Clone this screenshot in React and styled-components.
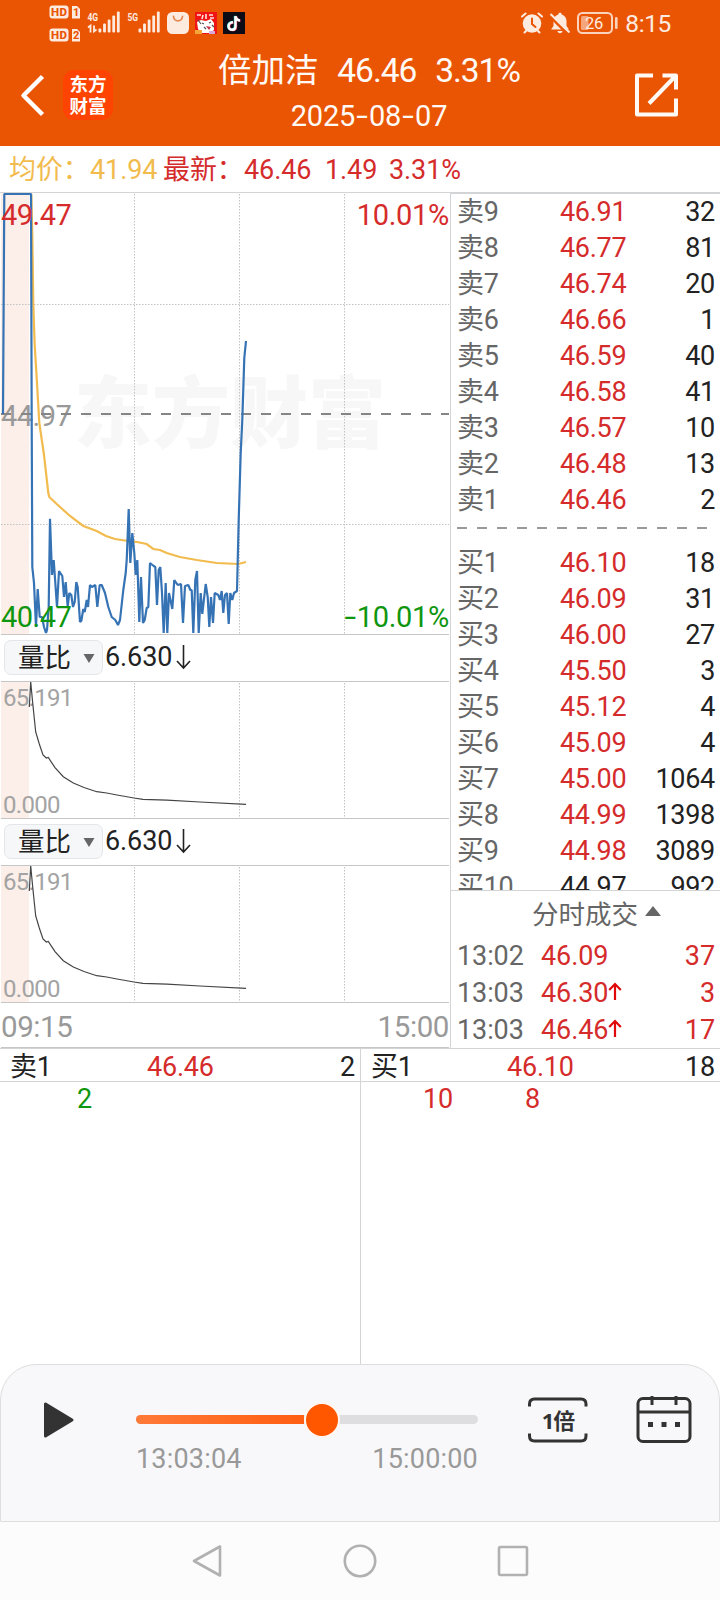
import React from 'react';
import styled, { createGlobalStyle } from 'styled-components';

// ── Theme values ────────────────────────────────────────────────────────────
const c = {
  brand: '#ea5504',
  red: '#d52b2b',
  green: '#0f960f',
  gold: '#f2bb4e',
  blue: '#3673b5',
  line: '#d3d4d6',
  axis: '#c6c6c6',
  text: '#222',
  label: '#666',
  muted: '#999',
};

const GlobalStyle = createGlobalStyle`
  * { box-sizing: border-box; }
  body {
    margin: 0;
    background: #fff;
    color: ${c.text};
    font-family: Roboto, 'Noto Sans CJK SC', sans-serif;
    font-size: 27px;
    letter-spacing: -0.1px;
  }
  svg { display: block; flex: none; }
`;

// ── Data ────────────────────────────────────────────────────────────────────
const asks = [
  ['卖9', '46.91', 32], ['卖8', '46.77', 81], ['卖7', '46.74', 20],
  ['卖6', '46.66', 1], ['卖5', '46.59', 40], ['卖4', '46.58', 41],
  ['卖3', '46.57', 10], ['卖2', '46.48', 13], ['卖1', '46.46', 2],
];

const bids = [
  ['买1', '46.10', 18], ['买2', '46.09', 31], ['买3', '46.00', 27],
  ['买4', '45.50', 3], ['买5', '45.12', 4], ['买6', '45.09', 4],
  ['买7', '45.00', 1064], ['买8', '44.99', 1398], ['买9', '44.98', 3089],
  ['买10', '44.97', 992],
];

const trades = [
  { time: '13:02', price: '46.09', volume: 37 },
  { time: '13:03', price: '46.30', volume: 3, up: true },
  { time: '13:03', price: '46.46', volume: 17, up: true },
];

const pricePoints = `3,414 4.3,194 31,194 31.7,420 32.3,567 34,583 36,627 37.7,589 39.7,617 42,617
  44,627 46,633 47,630 48.7,607 50,518.7 52,575 53.7,560 57,607 59,571 62.3,576 64,597 65.7,582
  67.7,607 69.3,593 71.3,595 73,607 74.7,602 76.3,582 77.7,587 80,622 81.3,621 83.3,609 84.7,612
  86.7,600 88,607 90,585 92,587 95.3,585 97.3,607 99.7,585 101.7,585 105,593 108.3,607 111.7,617
  115.3,620 118,625 120,620 123.3,590 125.7,573 126.7,560 128.7,509 130.3,563 132.3,533 134.3,553
  135.7,575 137.3,560 139.3,622 141,577 143,623 144.7,620 146.7,608 148.3,607 150,563 153.7,566
  155.3,567 157,605 158.7,570 160.3,567 162,593 163.7,633 165.7,583 167.3,633 169,593 172.3,609
  174.3,580 177.7,585 181,584 183,623 185,586 188.3,585 190.3,590 191.7,590 193.3,633 195.3,580
  197,571 198.7,633 200.7,593 202.3,614 205.7,584 207.7,597 209.3,627 211,597 213,623 214.7,593
  218.3,595 220,600 221.7,591 223.3,613 225,595 227,593 228.7,624 230.3,593 232.3,600 234,593
  237,591 238.7,520 240.7,453 242.3,420 244.3,358 246,341`;

const averagePoints = `31.3,194 32.3,235 33.3,304 34.7,345 36.7,378 39.3,423 44,455 48.3,493 49.3,497
  56.7,504 70,516 83.3,526 96.7,531 106,536 115,539 128.3,541 137,542 146.7,544 153.3,549 160,550
  166.7,553 180,557 196.7,560 216.7,563 238.3,564 246,562`;

const ratioPoints = `29.3,25 30.7,0 32.7,21 35.7,50 39.3,62 43,73 46.3,76 48.3,75.5 55,85.7 63.3,94.7
  73.3,101 84,105.500 96.7,109.7 106.7,111 117,113 134,116 143,117.3 167,118.2 200,120 246,122.3`;

const gridX = [134.5, 239.5, 344.5];

// ── Header ──────────────────────────────────────────────────────────────────
const Screen = styled.div`
  width: 720px;
  height: 1600px;
  display: flex;
  flex-direction: column;
  overflow: hidden;
`;

const Header = styled.header`
  height: 146px;
  background: ${c.brand};
  color: #fffaf5;
`;

const StatusBar = styled.div`
  height: 46px;
  padding: 0 49px;
  display: flex;
  justify-content: space-between;
`;

const StatusGroup = styled.div`
  display: flex;
  align-items: center;
  gap: ${(p) => p.$gap}px;
`;

const Clock = styled.span`
  margin-left: 1px;
  padding-top: 2px;
  font-size: 24.5px;
  line-height: 46px;
  color: #fdebe0;
  letter-spacing: -0.4px;
`;

const NavRow = styled.div`
  height: 100px;
  padding: 0 41px 0 20px;
  display: grid;
  grid-template-columns: 198px 302px 1fr;
`;

const NavStart = styled.div`
  display: flex;
  align-items: flex-start;
  padding-top: 24px;
  gap: 18px;
`;

const Logo = styled.div`
  width: 50px;
  height: 50px;
  padding-top: 3px;
  border-radius: 11px;
  background: #ff4402;
  color: #fff;
  font-family: 'Noto Sans CJK SC', sans-serif;
  font-size: 18.5px;
  font-weight: 700;
  line-height: 21.5px;
  letter-spacing: 0;
  text-align: center;
  white-space: pre-line;
`;

const Title = styled.div`
  text-align: center;
`;

const TitleLine = styled.div`
  display: flex;
  justify-content: space-between;
  font-size: 33.5px;
  line-height: 50px;
  letter-spacing: 0;
  span + span { letter-spacing: -1px; }
`;

const DateLine = styled.div`
  font-size: 29px;
  line-height: 40px;
  letter-spacing: -0.25px;
`;

const Dash = styled.span`
  display: inline-block;
  width: 14px;
  text-align: center;
  transform: scaleX(1.45);
`;

const NavEnd = styled.div`
  display: flex;
  justify-content: flex-end;
  padding-top: 26px;
`;

// ── Quote line ──────────────────────────────────────────────────────────────
const Quote = styled.div`
  height: 47px;
  padding-left: 9px;
  border-bottom: 1px solid ${c.line};
  display: grid;
  grid-template-columns: 81px 73px 81px 81px 64px auto;
  justify-content: start;
  line-height: 49px;
  color: ${c.red};
  white-space: nowrap;
`;

const Average = styled.span`
  color: ${c.gold};
`;

// ── Charts ──────────────────────────────────────────────────────────────────
const Main = styled.main`
  height: 855px;
  display: grid;
  grid-template-columns: 450px 270px;
`;

const Charts = styled.section`
  width: 448px;
  margin-left: 1px;
`;

// the tinted strip on the left is the pre-market session
const ChartBox = styled.div`
  position: relative;
  height: ${(p) => p.$height}px;
  border-bottom: 1px solid ${c.axis};
  background: linear-gradient(90deg, #fceee8 28px, transparent 28px);
  svg { margin-left: -1px; }
`;

const Watermark = styled.div`
  position: absolute;
  left: 73px;
  top: 168px;
  font-size: 78px;
  font-weight: 900;
  line-height: 110px;
  letter-spacing: 0;
  color: #f7f7f7;
`;

const ChartLayer = styled.div`
  position: relative;
`;

const PriceLabel = styled.span`
  position: absolute;
  top: ${(p) => p.$top}px;
  ${(p) => (p.$right ? 'right: 0;' : 'left: 0;')}
  font-size: 29px;
  line-height: 30px;
  letter-spacing: ${(p) => (p.$right ? -0.3 : -0.5)}px;
  color: ${(p) => p.$color};
  z-index: ${(p) => (p.$below ? 0 : 1)};
`;

const RatioLabel = styled.span`
  position: absolute;
  left: 2px;
  top: ${(p) => p.$top}px;
  font-size: 24px;
  line-height: 26px;
  letter-spacing: -0.7px;
  color: #a3a3a3;
`;

const IndicatorBar = styled.div`
  height: 47px;
  padding: 5px 0 6px 3px;
  border-bottom: 1px solid ${c.axis};
  display: flex;
  align-items: flex-start;
  line-height: 35px;
  gap: 2px;
`;

const Picker = styled.button`
  width: 99px;
  height: 35px;
  padding: 0 7px 0 13px;
  border: 1px solid #e4e6e9;
  border-radius: 7px;
  background: #f6f7f9;
  display: flex;
  align-items: center;
  justify-content: space-between;
  color: ${c.text};
  font: inherit;
  font-size: 26.5px;
  line-height: 33px;
  letter-spacing: 0;
`;

const TimeAxis = styled.div`
  height: 45px;
  border-bottom: 1px solid ${c.axis};
  display: flex;
  justify-content: space-between;
  font-size: 29.5px;
  line-height: 48px;
  letter-spacing: -0.4px;
  color: ${c.muted};
`;

// ── Order book ──────────────────────────────────────────────────────────────
const Side = styled.aside`
  border-left: 1px solid ${c.line};
  box-shadow: inset 0 1px 0 ${c.line};
  display: flex;
  flex-direction: column;
`;

const Book = styled.div`
  height: 697px;
  overflow: hidden;
`;

const BookRow = styled.div`
  height: 36px;
  padding: 0 5px 0 6px;
  display: grid;
  grid-template-columns: 103px 1fr auto;
  line-height: 38px;
  letter-spacing: -0.3px;
  span:first-child { color: ${c.label}; }
  span:nth-child(2) { color: ${(p) => (p.$flat ? c.text : c.red)}; }
`;

const BookDivider = styled.div`
  height: 2px;
  margin: 10px 13px 15px 6px;
  background: repeating-linear-gradient(90deg, #999 0 10px, transparent 10px 20px);
`;

const TradesHeader = styled.div`
  height: 47px;
  border-top: 1px solid ${c.line};
  padding-left: 22px;
  display: flex;
  align-items: center;
  justify-content: center;
  gap: 7px;
  color: ${c.label};
  font-size: 26.5px;
  letter-spacing: 0;
  line-height: 46px;
  span { padding-top: 1px; }
`;

const TradeRow = styled.div`
  height: 37.2px;
  padding: 0 5px 0 6px;
  display: grid;
  grid-template-columns: 84px 67px 1fr auto;
  line-height: 39px;
  color: ${c.red};
  span:first-child { color: ${c.label}; }
  svg { margin-top: 8px; }
`;

// ── Queue tables ────────────────────────────────────────────────────────────
const Queues = styled.section`
  flex: 1;
  display: grid;
  grid-template-columns: 361px 359px;
  border-top: 1px solid ${c.line};
`;

const Queue = styled.div`
  &:first-child { border-right: 1px solid ${c.line}; }
`;

const QueueHead = styled.div`
  height: 33px;
  padding: 0 5px 0 10px;
  border-bottom: 1px solid ${c.line};
  display: grid;
  grid-template-columns: ${(p) => p.$first}px 1fr auto;
  line-height: 37px;
  letter-spacing: -0.2px;
  span:nth-child(2) { color: ${c.red}; }
`;

const QueueBody = styled.div`
  padding-left: ${(p) => p.$left}px;
  display: grid;
  grid-template-columns: 102px 102px;
  line-height: 34px;
  color: ${(p) => p.$color};
`;

// ── Player ──────────────────────────────────────────────────────────────────
const Player = styled.section`
  height: 158px;
  border: 1px solid #dedede;
  border-radius: 36px 36px 0 0;
  background: #f8f8fa;
  padding: 29px 27px 0 42px;
  display: grid;
  grid-template-columns: 93px 342px 50px 60px 48px 56px;
  align-items: start;
`;

const PlayIcon = styled.svg`
  margin-top: 7px;
`;

const Track = styled.div`
  height: 9px;
  margin-top: 21px;
  border-radius: 5px;
  background: #dedee0;
  display: flex;
  align-items: center;
`;

const Fill = styled.div`
  height: 9px;
  border-radius: 5px 0 0 5px;
  background: linear-gradient(90deg, #ff7a38, #ff5f12);
`;

const Thumb = styled.div`
  flex: none;
  width: 36px;
  height: 36px;
  margin-top: 1px;
  border: 2px solid #fff6f0;
  border-radius: 50%;
  background: #ff5700;
`;

const Times = styled.div`
  display: flex;
  justify-content: space-between;
  margin-top: 19px;
  line-height: 32px;
  letter-spacing: 0.2px;
  color: ${c.muted};
`;

const Speed = styled.div`
  height: 46px;
  margin-top: 3px;
  display: grid;
  svg, span { grid-area: 1 / 1; }
  span {
    font-family: 'Open Sans', 'Noto Sans CJK SC', sans-serif;
    font-size: 22px;
    font-weight: 700;
    line-height: 46px;
    letter-spacing: -1px;
    text-align: center;
    color: #333;
  }
`;

const SystemNav = styled.nav`
  height: 78px;
  padding-right: 1px;
  background: #fcfcfc;
  display: flex;
  justify-content: center;
  align-items: center;
  gap: 120px;
  svg { fill: none; stroke: #b1b1b1; stroke-width: 2.6; stroke-linejoin: round; }
`;

// ── Icons ───────────────────────────────────────────────────────────────────
const HdBadges = () => (
  <svg width="32" height="46" fontFamily="Roboto" fontWeight="800" fill={c.brand}>
    {[5, 28].map((y, i) => (
      <g key={y}>
        <rect x="0.5" y={y + 0.5} width="19" height="13" rx="3" fill="#fdebe0" />
        <text x="2" y={y + 11} fontSize="11.5" letterSpacing="0" textLength="16">HD</text>
        <path d={`M23 ${y + 1}h5l3 3v9.500h-8z`} fill="#fdebe0" />
        <text x="24" y={y + 11} fontSize="11">{i + 1}</text>
      </g>
    ))}
  </svg>
);

const Signal = ({ label, data }) => (
  <svg width="34" height="46" fill="#fdebe0">
    <text x="0.5" y="20.500" fontSize="11.5" fontFamily="Roboto" fontWeight="700" textLength="10.5" lengthAdjust="spacingAndGlyphs">{label}</text>
    {data && <path d="M1 27.500l2.500-2v7M9.500 29.500l-2.500 2v-6" fill="none" stroke="#fdebe0" strokeWidth="1.8" />}
    {[4, 9, 13, 17, 21].map((h, i) => (
      <rect key={h} x={11.5 + i * 4.6} y={32.5 - h} width="2.8" height={h} rx="1" />
    ))}
  </svg>
);

const BagIcon = () => (
  <svg width="22" height="22">
    <rect width="22" height="22" rx="5.500" fill="#fdebe0" />
    <path d="M6.500 4.500c.8 5.800 8.200 5.800 9 0" fill="none" stroke="#e58a55" strokeWidth="1.800" strokeLinecap="round" />
  </svg>
);

const GameIcon = () => (
  <svg width="22" height="22">
    <rect width="22" height="22" fill="#f01414" />
    <path d="M2 3h4M8 3l-1 4M11 2v5M14 3h4M15 6h4" stroke="#ffe3df" strokeWidth="1.600" />
    <path d="M2 10l4-2 5 1 5-2 3 4v7l-4 3H7l-4-4z" fill="#fff" />
    <path d="M3 8l3 4M7 11l2 1M14 11l2-1M9 15l2 2M17 13l2 2" stroke="#555" strokeWidth="1.200" />
    <path d="M11 14l5 1-2 3z" fill="#c8334a" />
    <rect y="18" width="7" height="4" fill="#f4a63a" />
    <rect x="14" y="19" width="6" height="3" fill="#d9a7d9" />
  </svg>
);

const NoteIcon = () => (
  <svg width="22" height="22" fill="none" strokeWidth="2.400">
    <rect width="22" height="22" fill="#0c0b16" />
    <path d="M9.500 10c-6 0-5.500 8-.5 7.500 2 0 3-1.500 3-3.500V4c.5 2.500 2 4 4.500 4.200" stroke="#2fe0e0" />
    <path d="M10.500 10.600c-6 0-5.500 8-.5 7.500 2 0 3-1.500 3-3.500V4.600c.5 2.500 2 4 4.500 4.200" stroke="#f03a5f" />
    <path d="M10 10.300c-6 0-5.500 8-.5 7.500 2 0 3-1.500 3-3.500V4.300c.5 2.500 2 4 4.500 4.200" stroke="#fff" />
  </svg>
);

const AlarmIcon = () => (
  <svg width="22" height="22" fill="none" stroke="#fdebe0" strokeWidth="2" strokeLinecap="round">
    <circle cx="11" cy="11.500" r="9.300" fill="#fdebe0" stroke="none" />
    <path d="M1 4.500L4.500 1.500M21 4.500L17.500 1.500M3.500 20.500l2-2M18.500 20.500l-2-2" />
    <path d="M11 6.500v5.500l3.500 3" stroke={c.brand} />
  </svg>
);

const MutedBell = () => (
  <svg width="22" height="22">
    <path d="M11 .8c1 0 1.700.7 1.700 1.600 3 .8 4.800 3.400 4.800 6.600v5l2.500 3.500H2L4.500 14V9c0-3.200 1.800-5.800 4.800-6.600C9.300 1.500 10 .8 11 .8zM8.500 19h5c-.5 3-4.500 3-5 0z" fill="#fdebe0" />
    <path d="M0 3.500L19 22.500" stroke={c.brand} strokeWidth="2.500" />
    <path d="M1.500 2L20.500 20.500" stroke="#fdebe0" strokeWidth="2" />
  </svg>
);

const Battery = () => (
  <svg width="41" height="22" fill="none">
    <rect x="1" y="1" width="34" height="20" rx="4.500" stroke="#fbd3bd" strokeWidth="2" />
    <rect x="4" y="4" width="7.500" height="14" rx="1.500" fill="#f5a67c" />
    <text x="8" y="17" fontSize="16.5" fill="#fdebe0" letterSpacing="-0.3">26</text>
    <rect x="38" y="5" width="2.600" height="12" rx="1.300" fill="#fbd3bd" />
  </svg>
);

const BackIcon = () => (
  <svg width="25" height="50" fill="none" stroke="#fff" strokeWidth="4.500">
    <path d="M22.500 6.500L3.500 25.500L22.500 44.500" strokeLinejoin="round" />
  </svg>
);

const ShareIcon = () => (
  <svg width="45" height="46" fill="none" stroke="#fffaf5" strokeWidth="4" strokeLinejoin="round">
    <path d="M19 3.500H3V42.500H42V26.500" />
    <path d="M28.500 3.500H42V17.500M41.500 4L15 31.500" />
  </svg>
);

const DownArrow = () => (
  <svg width="18" height="34" fill="none" stroke={c.text} strokeWidth="1.600">
    <path d="M9.500 5V28M3 21L9.500 28L16 21" />
  </svg>
);

const UpArrow = () => (
  <svg width="14" height="20" fill="none" stroke="#e00808" strokeWidth="2.200">
    <path d="M7 18V2.500M1.200 8L7 2L12.800 8" />
  </svg>
);

const CalendarIcon = () => (
  <svg width="56" height="50" fill="none" stroke="#333" strokeWidth="3">
    <rect x="2" y="4.500" width="52" height="43" rx="5" />
    <path d="M2 18H54M16 2v9M40 2v9" />
    <path d="M12 30.500h5M25.500 30.500h5M39 30.500h5" strokeWidth="5" />
  </svg>
);

// ── Parts ───────────────────────────────────────────────────────────────────
function VerticalGrid({ top, bottom }) {
  return gridX.map((x) => (
    <path key={x} d={`M${x} ${top}V${bottom}`} stroke="#c2c2c2" strokeDasharray="1.500 1.500" />
  ));
}

function PriceChart() {
  return (
    <ChartBox $height={442}>
      <Watermark>东方财富</Watermark>
      <PriceLabel $top={208} $color={c.muted} $below>44.97</PriceLabel>
      <ChartLayer>
        <svg width="449" height="441" viewBox="0 193 449 441" fill="none">
          <VerticalGrid top={194} bottom={634} />
          <path d="M1 304.500H449M1 524.500H449" stroke="#c2c2c2" strokeDasharray="1.500 1.500" />
          <path d="M1 414H449" stroke="#858585" strokeWidth="1.800" strokeDasharray="10 10" />
          <polyline points={averagePoints} stroke={c.gold} strokeWidth="2.200" />
          <polyline points={pricePoints} stroke={c.blue} strokeWidth="2.200" strokeLinejoin="bevel" />
        </svg>
      </ChartLayer>
      <PriceLabel $top={7} $color={c.red}>49.47</PriceLabel>
      <PriceLabel $top={7} $color={c.red} $right>10.01%</PriceLabel>
      <PriceLabel $top={409} $color={c.green}>40.47</PriceLabel>
      <PriceLabel $top={409} $color={c.green} $right><Dash>-</Dash>10.01%</PriceLabel>
    </ChartBox>
  );
}

function RatioChart() {
  return (
    <>
      <IndicatorBar>
        <Picker>
          量比
          <svg width="12" height="10" fill="#666"><path d="M.5 1h11L6 10z" /></svg>
        </Picker>
        <span>6.630</span>
        <DownArrow />
      </IndicatorBar>
      <ChartBox $height={137}>
        <RatioLabel $top={3}>65.191</RatioLabel>
        <RatioLabel $top={110}>0.000</RatioLabel>
        <ChartLayer>
          <svg width="449" height="136" fill="none">
            <VerticalGrid top={1} bottom={136} />
            <polyline points={ratioPoints} stroke="#444" strokeWidth="1.200" />
          </svg>
        </ChartLayer>
      </ChartBox>
    </>
  );
}

function BookRows({ rows }) {
  return rows.map(([level, price, volume]) => (
    <BookRow key={level} $flat={price === '44.97'}>
      <span>{level}</span>
      <span>{price}</span>
      <span>{volume}</span>
    </BookRow>
  ));
}

export default function App() {
  return (
    <Screen>
      <GlobalStyle />
      <Header>
        <StatusBar>
          <StatusGroup $gap={6}>
            <HdBadges />
            <Signal label="4G" data />
            <Signal label="5G" />
            <BagIcon />
            <GameIcon />
            <NoteIcon />
          </StatusGroup>
          <StatusGroup $gap={6}>
            <AlarmIcon />
            <MutedBell />
            <Battery />
            <Clock>8:15</Clock>
          </StatusGroup>
        </StatusBar>
        <NavRow>
          <NavStart>
            <BackIcon />
            <Logo>{'东方\n财富'}</Logo>
          </NavStart>
          <Title>
            <TitleLine>
              <span>倍加洁</span>
              <span>46.46</span>
              <span>3.31%</span>
            </TitleLine>
            <DateLine>2025<Dash>-</Dash>08<Dash>-</Dash>07</DateLine>
          </Title>
          <NavEnd>
            <ShareIcon />
          </NavEnd>
        </NavRow>
      </Header>

      <Quote>
        <Average>均价：</Average>
        <Average>41.94</Average>
        <span>最新：</span>
        <span>46.46</span>
        <span>1.49</span>
        <span>3.31%</span>
      </Quote>

      <Main>
        <Charts>
          <PriceChart />
          <RatioChart />
          <RatioChart />
          <TimeAxis>
            <span>09:15</span>
            <span>15:00</span>
          </TimeAxis>
        </Charts>

        <Side>
          <Book>
            <BookRows rows={asks} />
            <BookDivider />
            <BookRows rows={bids} />
          </Book>
          <TradesHeader>
            <span>分时成交</span>
            <svg width="16" height="18" fill="#666"><path d="M8 1L16 11H0z" /></svg>
          </TradesHeader>
          {trades.map((t) => (
            <TradeRow key={t.time + t.price}>
              <span>{t.time}</span>
              <span>{t.price}</span>
              <div>{t.up && <UpArrow />}</div>
              <span>{t.volume}</span>
            </TradeRow>
          ))}
        </Side>
      </Main>

      <Queues>
        <Queue>
          <QueueHead $first={137}>
            <span>卖1</span>
            <span>46.46</span>
            <span>2</span>
          </QueueHead>
          <QueueBody $left={77} $color={c.green}>
            <span>2</span>
          </QueueBody>
        </Queue>
        <Queue>
          <QueueHead $first={136}>
            <span>买1</span>
            <span>46.10</span>
            <span>18</span>
          </QueueHead>
          <QueueBody $left={62} $color={c.red}>
            <span>10</span>
            <span>8</span>
          </QueueBody>
        </Queue>
      </Queues>

      <Player>
        <PlayIcon width="32" height="38" fill="#333" stroke="#333" strokeWidth="3" strokeLinejoin="round">
          <path d="M2.500 3V35L29 19z" />
        </PlayIcon>
        <div>
          <Track>
            <Fill style={{ width: `${(168 / 342) * 100}%` }} />
            <Thumb />
          </Track>
          <Times>
            <span>13:03:04</span>
            <span>15:00:00</span>
          </Times>
        </div>
        <i />
        <Speed>
          <svg width="60" height="46" fill="none" stroke="#333" strokeWidth="3">
            <path d="M1.500 9.500V7Q1.500 2 6.500 2H53Q58 2 58 7V9.500M1.500 36.500V39Q1.500 44 6.500 44H53Q58 44 58 39V36.500" />
          </svg>
          <span>1倍</span>
        </Speed>
        <i />
        <CalendarIcon />
      </Player>

      <SystemNav>
        <svg width="32" height="36"><path d="M3 18L29 3.500V32.500z" /></svg>
        <svg width="34" height="34"><circle cx="17" cy="17" r="15.200" /></svg>
        <svg width="32" height="32"><rect x="2" y="2" width="28" height="28" rx="1.500" /></svg>
      </SystemNav>
    </Screen>
  );
}
